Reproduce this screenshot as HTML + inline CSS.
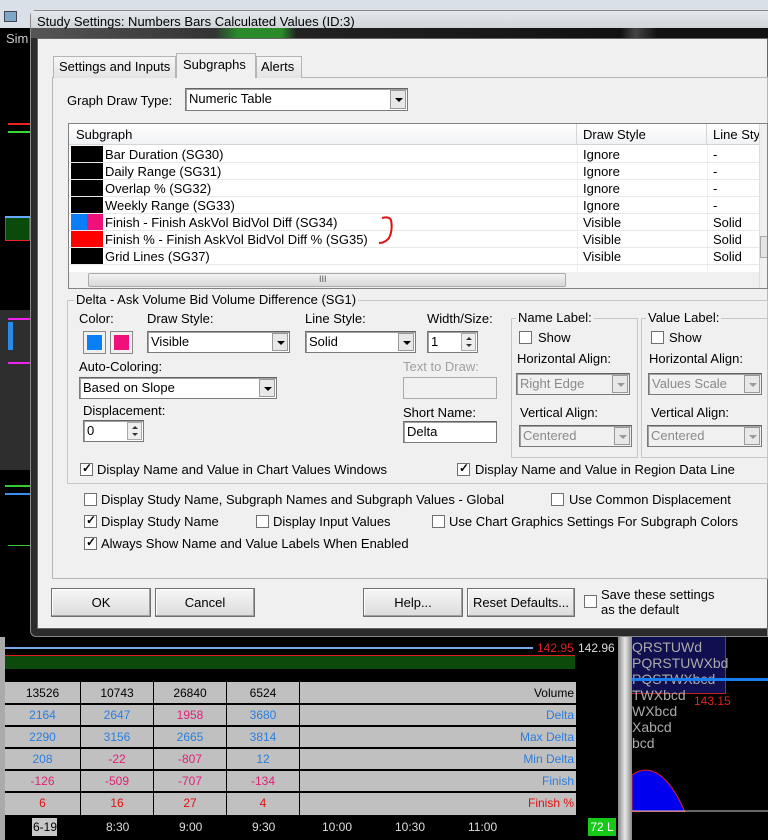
<!DOCTYPE html>
<html><head><meta charset="utf-8"><style>
*{box-sizing:border-box;margin:0;padding:0}
body{width:768px;height:840px;overflow:hidden;background:#000;position:relative;font-family:"Liberation Sans",Arial,sans-serif;font-size:13px;color:#000}
.a{position:absolute}
.t{position:absolute;white-space:nowrap;line-height:15px}
.combo{position:absolute;background:#fff;border:1px solid #7a7a7a;border-top-color:#646464;box-shadow:inset 1px 1px 0 #a0a0a0}
.combo .v{position:absolute;left:3px;top:2px;white-space:nowrap}
.combo .b{position:absolute;right:1px;top:1px;bottom:1px;width:16px;background:#e8e8e8;border:1px solid #999}
.combo .b:after{content:"";position:absolute;left:4px;top:7px;border-left:4px solid transparent;border-right:4px solid transparent;border-top:4px solid #000}
.dis{background:#f0f0f0}.dis .v{color:#8a8a8a}.dis .b:after{border-top-color:#999}
.cb{position:absolute;width:13px;height:13px;background:#fff;border:1px solid #707070}
.ck:after{content:"✓";position:absolute;left:1px;top:-3px;font-size:12px;font-weight:bold}
.btn{position:absolute;height:29px;background:linear-gradient(#f6f6f6,#dcdcdc);border:1px solid #707070;box-shadow:inset -1px -1px 0 #a0a0a0,inset 1px 1px 0 #fff;text-align:center;line-height:27px}
.grp{position:absolute;border:1px solid #c6c6c6}
.grp>.l{position:absolute;top:-9px;left:6px;background:#f0f0f0;padding:0 2px;white-space:nowrap}
.row{position:absolute;left:0;width:690px;height:17px;border-bottom:1px solid #e8e8e8}
.sw{position:absolute;left:2px;top:0;width:32px;height:16px;background:#000}
.n{font-family:"Liberation Sans Narrow","Liberation Sans",sans-serif;font-size:12px}
.spin{position:absolute;width:15px;height:18px;border:1px solid #aaa;background:#eee}
.spin:before{content:"";position:absolute;left:4px;top:3px;border-left:3px solid transparent;border-right:3px solid transparent;border-bottom:3px solid #333}
.spin:after{content:"";position:absolute;left:4px;top:10px;border-left:3px solid transparent;border-right:3px solid transparent;border-top:3px solid #333}
</style></head><body>
<div class="a" style="left:0;top:0;width:768px;height:30px;background:#d9e0e8"></div>
<div class="a" style="left:4px;top:11px;width:13px;height:11px;background:#7fa7c8;border:1px solid #445"></div>
<div class="a" style="left:0;top:28px;width:30px;height:812px;background:#000"></div>
<div class="t" style="left:6px;top:31px;color:#ccc">Sim</div>
<div class="a" style="left:8px;top:123px;width:22px;height:2px;background:#e22"></div>
<div class="a" style="left:8px;top:131px;width:22px;height:2px;background:#3d3"></div>
<div class="a" style="left:5px;top:217px;width:25px;height:24px;background:#0a4a0a;border:1px solid #e22"></div>
<div class="a" style="left:5px;top:216px;width:25px;height:2px;background:#6af"></div>
<div class="a" style="left:0;top:310px;width:30px;height:160px;background:#2e2e2e"></div>
<div class="a" style="left:8px;top:318px;width:22px;height:2px;background:#e2e"></div>
<div class="a" style="left:8px;top:322px;width:5px;height:28px;background:#2a8ae8"></div>
<div class="a" style="left:8px;top:362px;width:22px;height:2px;background:#e2e"></div>
<div class="a" style="left:5px;top:485px;width:25px;height:2px;background:#3c3"></div>
<div class="a" style="left:5px;top:493px;width:25px;height:2px;background:#3a8ef0"></div>
<div class="a" style="left:8px;top:545px;width:22px;height:1px;background:#3c3"></div>

<div class="a" style="left:30px;top:10px;width:738px;height:627px;background:#2b2b2b;border:1px solid #888;border-radius:6px 0 0 6px"></div>
<div class="a" style="left:31px;top:11px;width:737px;height:17px;background:linear-gradient(#e4e8ec,#d0d5da)"></div>
<div class="a" style="left:31px;top:28px;width:737px;height:10px;background:linear-gradient(90deg,#555 0,#333 25%,#2a8a2a 28%,#2a8a2a 34%,#222 36%,#111 80%,#444 82%,#111 85%)"></div>
<div class="t" style="left:37px;top:14px;font-size:13px">Study Settings: Numbers Bars Calculated Values (ID:3)</div>
<div class="a" style="left:37px;top:38px;width:731px;height:591px;background:#f0f0f0;border:1px solid #666"></div>

<div class="a" style="left:52px;top:77px;width:716px;height:502px;border:1px solid #b5b5b5;background:#f0f0f0"></div>
<div class="a" style="left:53px;top:56px;width:123px;height:22px;border:1px solid #b5b5b5;border-bottom:none;background:linear-gradient(#f5f5f5,#e4e4e4)"></div>
<div class="t" style="left:59px;top:59px">Settings and Inputs</div>
<div class="a" style="left:176px;top:53px;width:80px;height:25px;border:1px solid #b5b5b5;border-bottom:none;background:#f0f0f0"></div>
<div class="t" style="left:183px;top:57px">Subgraphs</div>
<div class="a" style="left:256px;top:56px;width:46px;height:22px;border:1px solid #b5b5b5;border-bottom:none;background:linear-gradient(#f5f5f5,#e4e4e4)"></div>
<div class="t" style="left:261px;top:59px">Alerts</div>

<div class="t" style="left:67px;top:93px">Graph Draw Type:</div>
<div class="combo" style="left:185px;top:88px;width:223px;height:23px"><span class="v">Numeric Table</span><span class="b"></span></div>

<div class="a" style="left:68px;top:123px;width:700px;height:166px;border:1px solid #828282;background:#fff;overflow:hidden">
 <div class="a" style="left:0;top:0;width:700px;height:21px;background:linear-gradient(#fff,#f1f2f4);border-bottom:1px solid #d5d5d5"></div>
 <div class="t" style="left:7px;top:3px">Subgraph</div>
 <div class="a" style="left:507px;top:0;width:1px;height:21px;background:#d5d5d5"></div>
 <div class="t" style="left:514px;top:3px">Draw Style</div>
 <div class="a" style="left:637px;top:0;width:1px;height:21px;background:#d5d5d5"></div>
 <div class="t" style="left:644px;top:3px">Line Sty</div>
 <div class="a" style="left:508px;top:21px;width:1px;height:128px;background:#eee"></div>
 <div class="a" style="left:638px;top:21px;width:1px;height:128px;background:#eee"></div>
 <div style="position:absolute;left:0;top:22px">
  <div class="row" style="top:0"><div class="sw"></div><div class="t" style="left:36px;top:1px">Bar Duration (SG30)</div><div class="t" style="left:514px;top:1px">Ignore</div><div class="t" style="left:644px;top:1px">-</div></div>
  <div class="row" style="top:17px"><div class="sw"></div><div class="t" style="left:36px;top:1px">Daily Range (SG31)</div><div class="t" style="left:514px;top:1px">Ignore</div><div class="t" style="left:644px;top:1px">-</div></div>
  <div class="row" style="top:34px"><div class="sw"></div><div class="t" style="left:36px;top:1px">Overlap % (SG32)</div><div class="t" style="left:514px;top:1px">Ignore</div><div class="t" style="left:644px;top:1px">-</div></div>
  <div class="row" style="top:51px"><div class="sw"></div><div class="t" style="left:36px;top:1px">Weekly Range (SG33)</div><div class="t" style="left:514px;top:1px">Ignore</div><div class="t" style="left:644px;top:1px">-</div></div>
  <div class="row" style="top:68px"><div class="sw" style="width:16px;background:#0a7ef8"></div><div class="sw" style="left:18px;width:16px;background:#f0107a"></div><div class="t" style="left:36px;top:1px">Finish - Finish AskVol BidVol Diff (SG34)</div><div class="t" style="left:514px;top:1px">Visible</div><div class="t" style="left:644px;top:1px">Solid</div></div>
  <div class="row" style="top:85px"><div class="sw" style="background:#f00"></div><div class="t" style="left:36px;top:1px">Finish % - Finish AskVol BidVol Diff % (SG35)</div><div class="t" style="left:514px;top:1px">Visible</div><div class="t" style="left:644px;top:1px">Solid</div></div>
  <div class="row" style="top:102px"><div class="sw"></div><div class="t" style="left:36px;top:1px">Grid Lines (SG37)</div><div class="t" style="left:514px;top:1px">Visible</div><div class="t" style="left:644px;top:1px">Solid</div></div>
 </div>
 <svg class="a" style="left:310px;top:90px" width="30" height="34"><path d="M3 4 Q10 2 12 6 Q14 16 10 24 Q6 29 0 29" stroke="#e01010" stroke-width="2" fill="none"/></svg>
 <div class="a" style="left:0;top:148px;width:690px;height:17px;background:#f0f0f0"></div>
 <div class="a" style="left:19px;top:149px;width:478px;height:14px;background:linear-gradient(#f2f2f2,#d8d8d8);border:1px solid #aaa;border-radius:2px"></div>
 <div class="t" style="left:250px;top:148px;font-size:9px;color:#555">III</div>
 <div class="a" style="left:690px;top:0;width:10px;height:166px;background:#f0f0f0;border-left:1px solid #ddd"></div>
 <div class="a" style="left:691px;top:112px;width:9px;height:22px;background:#e4e4e4;border:1px solid #aaa"></div>
</div>

<div class="grp" style="left:67px;top:300px;width:701px;height:184px"><span class="l">Delta - Ask Volume Bid Volume Difference (SG1)</span></div>
<div class="t" style="left:79px;top:311px">Color:</div>
<div class="a" style="left:83px;top:331px;width:23px;height:23px;border:1px solid #888;background:#f0f0f0"><div class="a" style="left:3px;top:3px;width:15px;height:15px;background:#0a7ef8"></div></div>
<div class="a" style="left:110px;top:331px;width:23px;height:23px;border:1px solid #888;background:#f0f0f0"><div class="a" style="left:3px;top:3px;width:15px;height:15px;background:#f0107a"></div></div>
<div class="t" style="left:147px;top:311px">Draw Style:</div>
<div class="combo" style="left:147px;top:331px;width:143px;height:22px"><span class="v">Visible</span><span class="b"></span></div>
<div class="t" style="left:305px;top:311px">Line Style:</div>
<div class="combo" style="left:305px;top:331px;width:111px;height:22px"><span class="v">Solid</span><span class="b"></span></div>
<div class="t" style="left:427px;top:311px">Width/Size:</div>
<div class="combo" style="left:427px;top:331px;width:51px;height:22px"><span class="v">1</span></div>
<div class="spin" style="left:461px;top:333px"></div>
<div class="t" style="left:79px;top:359px">Auto-Coloring:</div>
<div class="combo" style="left:79px;top:377px;width:198px;height:22px"><span class="v">Based on Slope</span><span class="b"></span></div>
<div class="t" style="left:83px;top:403px">Displacement:</div>
<div class="combo" style="left:83px;top:420px;width:61px;height:22px"><span class="v">0</span></div>
<div class="spin" style="left:127px;top:422px"></div>
<div class="t" style="left:403px;top:359px;color:#a0a0a0">Text to Draw:</div>
<div class="a" style="left:403px;top:377px;width:94px;height:22px;border:1px solid #aaa;background:#f0f0f0"></div>
<div class="t" style="left:403px;top:405px">Short Name:</div>
<div class="combo" style="left:403px;top:421px;width:94px;height:22px"><span class="v">Delta</span></div>

<div class="grp" style="left:511px;top:318px;width:127px;height:140px"><span class="l" style="left:4px">Name Label:</span></div>
<div class="cb" style="left:519px;top:331px"></div><div class="t" style="left:538px;top:330px">Show</div>
<div class="t" style="left:517px;top:351px">Horizontal Align:</div>
<div class="combo dis" style="left:516px;top:373px;width:114px;height:22px"><span class="v">Right Edge</span><span class="b"></span></div>
<div class="t" style="left:520px;top:405px">Vertical Align:</div>
<div class="combo dis" style="left:519px;top:425px;width:113px;height:22px"><span class="v">Centered</span><span class="b"></span></div>

<div class="grp" style="left:641px;top:318px;width:127px;height:140px"><span class="l" style="left:4px">Value Label:</span></div>
<div class="cb" style="left:651px;top:331px"></div><div class="t" style="left:669px;top:330px">Show</div>
<div class="t" style="left:649px;top:351px">Horizontal Align:</div>
<div class="combo dis" style="left:648px;top:373px;width:114px;height:22px"><span class="v">Values Scale</span><span class="b"></span></div>
<div class="t" style="left:651px;top:405px">Vertical Align:</div>
<div class="combo dis" style="left:647px;top:425px;width:115px;height:22px"><span class="v">Centered</span><span class="b"></span></div>

<div class="cb ck" style="left:80px;top:463px"></div><div class="t" style="left:97px;top:462px">Display Name and Value in Chart Values Windows</div>
<div class="cb ck" style="left:457px;top:463px"></div><div class="t" style="left:475px;top:462px">Display Name and Value in Region Data Line</div>

<div class="cb" style="left:84px;top:493px"></div><div class="t" style="left:101px;top:492px">Display Study Name, Subgraph Names and Subgraph Values - Global</div>
<div class="cb" style="left:551px;top:493px"></div><div class="t" style="left:569px;top:492px">Use Common Displacement</div>
<div class="cb ck" style="left:84px;top:515px"></div><div class="t" style="left:101px;top:514px">Display Study Name</div>
<div class="cb" style="left:256px;top:515px"></div><div class="t" style="left:273px;top:514px">Display Input Values</div>
<div class="cb" style="left:432px;top:515px"></div><div class="t" style="left:449px;top:514px">Use Chart Graphics Settings For Subgraph Colors</div>
<div class="cb ck" style="left:84px;top:537px"></div><div class="t" style="left:101px;top:536px">Always Show Name and Value Labels When Enabled</div>

<div class="btn" style="left:51px;top:588px;width:100px">OK</div>
<div class="btn" style="left:155px;top:588px;width:100px">Cancel</div>
<div class="btn" style="left:363px;top:588px;width:100px">Help...</div>
<div class="btn" style="left:467px;top:588px;width:108px">Reset Defaults...</div>
<div class="cb" style="left:584px;top:595px"></div>
<div class="t" style="left:601px;top:587px;line-height:15px">Save these settings<br>as the default</div>

<div class="a" style="left:0;top:637px;width:768px;height:203px;background:#000"></div>
<div class="a" style="left:0;top:637px;width:5px;height:203px;background:#aaa"></div>
<div class="a" style="left:5px;top:647px;width:528px;height:2px;background:#7aa8e8"></div>
<div class="a" style="left:5px;top:655px;width:570px;height:14px;background:#0c4a0c;border-top:1px solid #d22"></div>
<div class="t n" style="left:537px;top:641px;color:#e02020">142.95</div>
<div class="t n" style="left:578px;top:641px;color:#ddd">142.96</div>
<div class="a" style="left:5px;top:682px;width:571px;height:133px;background:#c0c0c0"></div>
<div class="a n" style="left:5px;top:682px;width:571px;height:133px;font-size:12px">
 <div class="a" style="left:75px;top:0;width:1px;height:133px;background:#000"></div>
 <div class="a" style="left:148px;top:0;width:1px;height:133px;background:#000"></div>
 <div class="a" style="left:221px;top:0;width:1px;height:133px;background:#000"></div>
 <div class="a" style="left:294px;top:0;width:1px;height:133px;background:#000"></div>
 <div class="a" style="left:0;top:21px;width:571px;height:2px;background:#000"></div>
 <div class="a" style="left:0;top:43px;width:571px;height:2px;background:#000"></div>
 <div class="a" style="left:0;top:65px;width:571px;height:2px;background:#000"></div>
 <div class="a" style="left:0;top:87px;width:571px;height:2px;background:#000"></div>
 <div class="a" style="left:0;top:109px;width:571px;height:2px;background:#000"></div>
 <div class="t" style="left:0;top:4px;width:75px;text-align:center">13526</div><div class="t" style="left:76px;top:4px;width:72px;text-align:center">10743</div><div class="t" style="left:149px;top:4px;width:72px;text-align:center">26840</div><div class="t" style="left:222px;top:4px;width:72px;text-align:center">6524</div><div class="t" style="right:2px;top:4px">Volume</div>
 <div class="t" style="left:0;top:26px;width:75px;text-align:center;color:#2a7ee0">2164</div><div class="t" style="left:76px;top:26px;width:72px;text-align:center;color:#2a7ee0">2647</div><div class="t" style="left:149px;top:26px;width:72px;text-align:center;color:#e0207a">1958</div><div class="t" style="left:222px;top:26px;width:72px;text-align:center;color:#2a7ee0">3680</div><div class="t" style="right:2px;top:26px;color:#2a7ee0">Delta</div>
 <div class="t" style="left:0;top:48px;width:75px;text-align:center;color:#2a7ee0">2290</div><div class="t" style="left:76px;top:48px;width:72px;text-align:center;color:#2a7ee0">3156</div><div class="t" style="left:149px;top:48px;width:72px;text-align:center;color:#2a7ee0">2665</div><div class="t" style="left:222px;top:48px;width:72px;text-align:center;color:#2a7ee0">3814</div><div class="t" style="right:2px;top:48px;color:#2a7ee0">Max Delta</div>
 <div class="t" style="left:0;top:70px;width:75px;text-align:center;color:#2a7ee0">208</div><div class="t" style="left:76px;top:70px;width:72px;text-align:center;color:#e0207a">-22</div><div class="t" style="left:149px;top:70px;width:72px;text-align:center;color:#e0207a">-807</div><div class="t" style="left:222px;top:70px;width:72px;text-align:center;color:#2a7ee0">12</div><div class="t" style="right:2px;top:70px;color:#2a7ee0">Min Delta</div>
 <div class="t" style="left:0;top:92px;width:75px;text-align:center;color:#e0207a">-126</div><div class="t" style="left:76px;top:92px;width:72px;text-align:center;color:#e0207a">-509</div><div class="t" style="left:149px;top:92px;width:72px;text-align:center;color:#e0207a">-707</div><div class="t" style="left:222px;top:92px;width:72px;text-align:center;color:#e0207a">-134</div><div class="t" style="right:2px;top:92px;color:#2a7ee0">Finish</div>
 <div class="t" style="left:0;top:114px;width:75px;text-align:center;color:#e01010">6</div><div class="t" style="left:76px;top:114px;width:72px;text-align:center;color:#e01010">16</div><div class="t" style="left:149px;top:114px;width:72px;text-align:center;color:#e01010">27</div><div class="t" style="left:222px;top:114px;width:72px;text-align:center;color:#e01010">4</div><div class="t" style="right:2px;top:114px;color:#e01010">Finish %</div>
</div>
<div class="a" style="left:32px;top:818px;width:25px;height:18px;background:#c8c8c8"></div>
<div class="t n" style="left:33px;top:820px;color:#000">6-19</div>
<div class="t n" style="left:106px;top:820px;color:#ddd">8:30</div>
<div class="t n" style="left:179px;top:820px;color:#ddd">9:00</div>
<div class="t n" style="left:252px;top:820px;color:#ddd">9:30</div>
<div class="t n" style="left:322px;top:820px;color:#ddd">10:00</div>
<div class="t n" style="left:395px;top:820px;color:#ddd">10:30</div>
<div class="t n" style="left:468px;top:820px;color:#ddd">11:00</div>
<div class="a n" style="left:588px;top:818px;width:28px;height:18px;background:#18c818;color:#fff;text-align:center;line-height:18px">72 L</div>
<div class="a" style="left:618px;top:637px;width:14px;height:203px;background:linear-gradient(90deg,#888,#e8e8e8,#888)"></div>
<div class="a" style="left:632px;top:637px;width:136px;height:175px;background:#000;overflow:hidden">
 <div class="a" style="left:0;top:0;width:94px;height:57px;background:#101050;border:1px solid #c02020;border-top:none;border-left:none"></div>
 <div class="t" style="left:0;top:3px;color:#aaa;font-size:14px">QRSTUWd</div>
 <div class="t" style="left:0;top:19px;color:#aaa;font-size:14px">PQRSTUWXbd</div>
 <div class="t" style="left:0;top:35px;color:#aaa;font-size:14px">PQSTWXbcd</div>
 <div class="a" style="left:0;top:41px;width:136px;height:3px;background:#1a7ef0"></div>
 <div class="t" style="left:0;top:51px;color:#aaa;font-size:14px">TWXbcd</div>
 <div class="t n" style="left:62px;top:57px;color:#e02020">143.15</div>
 <div class="t" style="left:0;top:67px;color:#aaa;font-size:14px">WXbcd</div>
 <div class="t" style="left:0;top:83px;color:#aaa;font-size:14px">Xabcd</div>
 <div class="t" style="left:0;top:99px;color:#aaa;font-size:14px">bcd</div>
 <svg class="a" style="left:0;top:0" width="136" height="175"><path d="M0 138 Q10 131 20 134 Q38 140 53 175 L0 175Z" fill="#0000ee" stroke="#e02020" stroke-width="1"/><line x1="0" y1="174" x2="136" y2="174" stroke="#ccc"/></svg>
</div>
</body></html>
